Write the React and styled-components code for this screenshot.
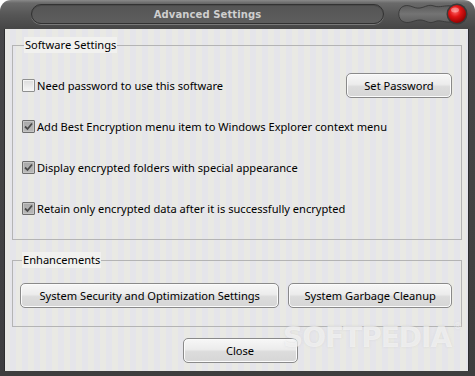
import React from "react";
import styled, { createGlobalStyle } from "styled-components";

const GlobalStyle = createGlobalStyle`
  html, body {
    margin: 0;
    padding: 0;
    background: #ffffff;
  }
  * {
    box-sizing: border-box;
  }
`;

const Window = styled("div")`
  position: relative;
  width: 475px;
  height: 376px;
  border-radius: 11px 11px 0 0;
  background: linear-gradient(to bottom, #8a8a8a 0px, #6a6a6a 3px, #575757 14px, #474747 28px, #3e3e3e 100%);
  display: flex;
  flex-direction: column;
  overflow: hidden;
`;

const TitleBar = styled("div")`
  height: 29px;
  display: flex;
  align-items: center;
  padding-left: 31px;
  flex-shrink: 0;
`;

const TitlePill = styled("div")`
  width: 353px;
  height: 20px;
  margin-top: -1px;
  border-radius: 10px;
  border: 1px solid #323232;
  box-shadow: 0 1px 0 #7a7a7a, inset 0 1px 0 #4a4a4a;
  background: linear-gradient(to bottom, #555555, #5e5e5e);
  display: flex;
  align-items: center;
  justify-content: center;
  font-family: "DejaVu Sans", "Liberation Sans", sans-serif;
  font-weight: bold;
  font-size: 10px;
  color: #cfcfcf;
  letter-spacing: 0.1px;
`;

const Ornament = styled("svg")`
  margin-left: 12px;
  margin-top: -1px;
  flex-shrink: 0;
`;

const Body = styled("div")`
  position: relative;
  margin: 0 6px 0 4px;
  height: 342px;
  padding: 8px 7px 0 8px;
  background: repeating-linear-gradient(
    to right,
    #e9e9e4 0px,
    #e9e9e4 6px,
    #e5e5ea 6px,
    #e5e5ea 12px
  );
  box-shadow: inset 1px 0 0 #2e2e2e, inset -1px 0 0 #2e2e2e;
  font-family: "Noto Sans", "Open Sans", sans-serif;
  font-size: 11.1px;
  color: #000;
`;

const Group = styled("fieldset")`
  margin: ${({ $top }) => $top}px 0 0 0;
  padding: ${({ $pad }) => $pad};
  border: 1px solid #b4b4b4;
  border-radius: 0;
  min-width: 0;
`;

const Legend = styled("legend")`
  margin-left: 2px;
  padding: 0 1px;
  line-height: 16px;
  background: #f1f1ef;
`;

const Rows = styled("div")`
  display: flex;
  flex-direction: column;
  gap: 16px;
`;

const Row = styled("div")`
  height: 25px;
  display: flex;
  align-items: center;
  justify-content: space-between;
`;

const CheckLabel = styled("label")`
  display: flex;
  align-items: center;
  gap: 2px;
  line-height: 16px;
  white-space: nowrap;
`;

const Box = styled("span")`
  width: 13px;
  height: 13px;
  border: 1px solid ${({ $checked }) => ($checked ? "#6e6e6e" : "#8e8f8f")};
  border-radius: 1px;
  background: ${({ $checked }) =>
    $checked
      ? "linear-gradient(to bottom, #a9a9a9, #b9b9b9)"
      : "linear-gradient(to bottom, #dcdcdc, #f6f6f6)"};
  box-shadow: inset 0 0 0 1px ${({ $checked }) => ($checked ? "#c4c4c4" : "#f4f4f4")};
  display: flex;
  align-items: center;
  justify-content: center;
`;

const Button = styled("button")`
  width: ${({ $w }) => $w}px;
  height: 25px;
  padding: 0;
  border: 1px solid #8a8a8a;
  border-radius: 5px;
  background: linear-gradient(to bottom, #f7f7f7 0%, #ececec 45%, #dcdcdc 55%, #d6d6d6 100%);
  box-shadow: inset 0 0 0 1px #fbfbfb;
  font-family: "Noto Sans", "Open Sans", sans-serif;
  font-size: 11.1px;
  color: #000;
  cursor: pointer;
`;

const ButtonRow = styled("div")`
  display: flex;
  gap: 9px;
`;

const Footer = styled("div")`
  margin-top: 11px;
  display: flex;
  justify-content: center;
  padding-left: 6px;
`;

const Watermark = styled("div")`
  position: absolute;
  left: 279px;
  top: 292px;
  font-family: "DejaVu Sans", sans-serif;
  font-weight: bold;
  font-size: 28px;
  letter-spacing: -1px;
  color: rgba(255, 255, 255, 0.55);
  text-shadow: 0 0 2px rgba(200, 200, 200, 0.5);
  pointer-events: none;
  sup {
    font-size: 9px;
    font-weight: normal;
    vertical-align: top;
    margin-left: 2px;
  }
`;

const CheckMark = () => (
  <svg width="9" height="9" viewBox="0 0 9 9">
    <path d="M1 4.5 L3.5 7 L8 1.5" fill="none" stroke="#4a4a4a" strokeWidth="1.8" />
  </svg>
);

const Check = ({ checked, children }) => (
  <CheckLabel>
    <Box $checked={checked}>{checked && <CheckMark />}</Box>
    {children}
  </CheckLabel>
);

const options = [
  { text: "Add Best Encryption menu item to Windows Explorer context menu", checked: true },
  { text: "Display encrypted folders with special appearance", checked: true },
  { text: "Retain only encrypted data after it is successfully encrypted", checked: true },
];

const App = () => (
  <>
    <GlobalStyle />
    <Window>
      <TitleBar>
        <TitlePill>Advanced Settings</TitlePill>
        <Ornament width="72" height="24" viewBox="0 0 72 24">
          <defs>
            <linearGradient id="wave" x1="0" y1="0" x2="0" y2="1">
              <stop offset="0" stopColor="#5a5a5a" />
              <stop offset="0.5" stopColor="#747474" />
              <stop offset="1" stopColor="#5e5e5e" />
            </linearGradient>
            <radialGradient id="red" cx="0.4" cy="0.35" r="0.7">
              <stop offset="0" stopColor="#ff6a6a" />
              <stop offset="0.45" stopColor="#e01414" />
              <stop offset="1" stopColor="#8a0000" />
            </radialGradient>
          </defs>
          <path
            d="M8 4 C14 2 18 7 24 6 C30 5 32 2 38 4 C44 6 48 3 56 4 L56 20 C48 21 44 17 38 20 C32 22 30 18 24 18 C18 18 14 22 8 20 C1 18 1 6 8 4 Z"
            fill="url(#wave)"
            stroke="#3c3c3c"
            strokeWidth="1"
          />
          <circle cx="61" cy="12" r="10.5" fill="#3a3a3a" />
          <circle cx="61" cy="12" r="9" fill="url(#red)" />
          <ellipse cx="59" cy="8" rx="4" ry="2.5" fill="rgba(255,255,255,0.35)" />
        </Ornament>
      </TitleBar>
      <Body>
        <Group $top={0} $pad="20px 9px 18px 9px">
          <Legend>Software Settings</Legend>
          <Rows>
            <Row>
              <Check checked={false}>Need password to use this software</Check>
              <Button $w={106}>Set Password</Button>
            </Row>
            {options.map((o) => (
              <Row key={o.text}>
                <Check checked={o.checked}>{o.text}</Check>
              </Row>
            ))}
          </Rows>
        </Group>
        <Group $top={12} $pad="15px 9px 18px 7px">
          <Legend>Enhancements</Legend>
          <ButtonRow>
            <Button $w={260}>System Security and Optimization Settings</Button>
            <Button $w={164}>System Garbage Cleanup</Button>
          </ButtonRow>
        </Group>
        <Footer>
          <Button $w={115}>Close</Button>
        </Footer>
        <Watermark>
          SOFTPEDIA<sup>®</sup>
        </Watermark>
      </Body>
    </Window>
  </>
);

export default App;
